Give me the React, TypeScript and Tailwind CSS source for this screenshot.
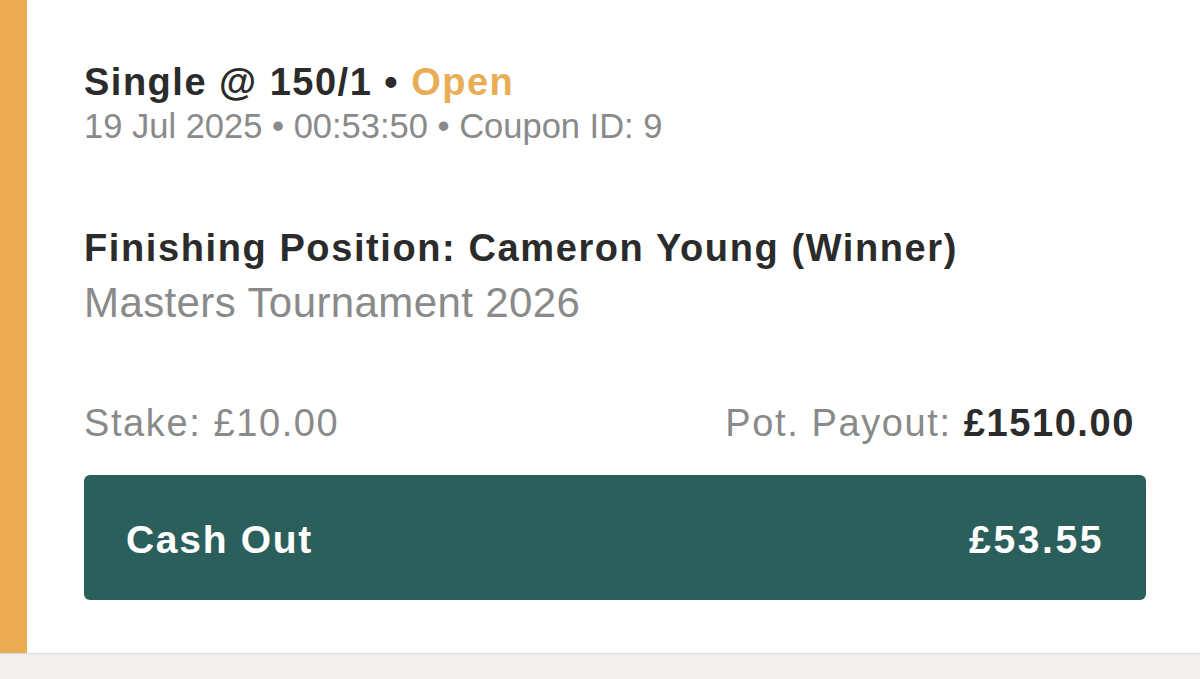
export default function App() {
  return (
    <div className="flex h-[679px] w-[1200px] flex-col bg-[#f1f0ee] font-['Liberation_Sans',Arial,sans-serif]">
      <div className="flex h-[654px] border-b border-[#dcdbd8] bg-white">
        <div className="w-[27px] shrink-0 bg-[#eaab52]" />
        <div className="flex flex-1 flex-col pl-[57px] pr-[54px] pt-[58px]">
          {/* Bet header */}
          <p className="text-[38px] font-bold leading-[48px] tracking-[1.5px] text-[#2b2b2b]">
            Single @ 150/1 • <span className="text-[#e8ad55]">Open</span>
          </p>
          <p className="text-[34.5px] leading-[40px] text-[#8a8a8a]">19 Jul 2025 • 00:53:50 • Coupon ID: 9</p>

          {/* Selection */}
          <p className="mt-[78px] text-[38px] font-bold leading-[48px] tracking-[1.6px] text-[#2b2b2b]">
            Finishing Position: Cameron Young (Winner)
          </p>
          <p className="mt-[9px] text-[42px] leading-[44px] tracking-[0.4px] text-[#8a8a8a]">Masters Tournament 2026</p>

          {/* Stake / payout */}
          <div className="mt-[75px] flex items-center justify-between text-[38px] leading-[46px] tracking-[1.6px]">
            <span className="text-[#8a8a8a]">Stake: £10.00</span>
            <span className="pr-[11px] text-[#8a8a8a]">
              Pot. Payout: <span className="font-bold text-[#2b2b2b]">£1510.00</span>
            </span>
          </div>

          <button className="mt-[29px] flex h-[125px] items-center justify-between rounded-[6px] bg-[#2a5f5c] pl-[42px] pr-[42px] pt-[5px] text-[39px] font-bold tracking-[1.7px] text-white">
            <span>Cash Out</span>
            <span className="tracking-[2.6px]">£53.55</span>
          </button>
        </div>
      </div>
    </div>
  )
}
